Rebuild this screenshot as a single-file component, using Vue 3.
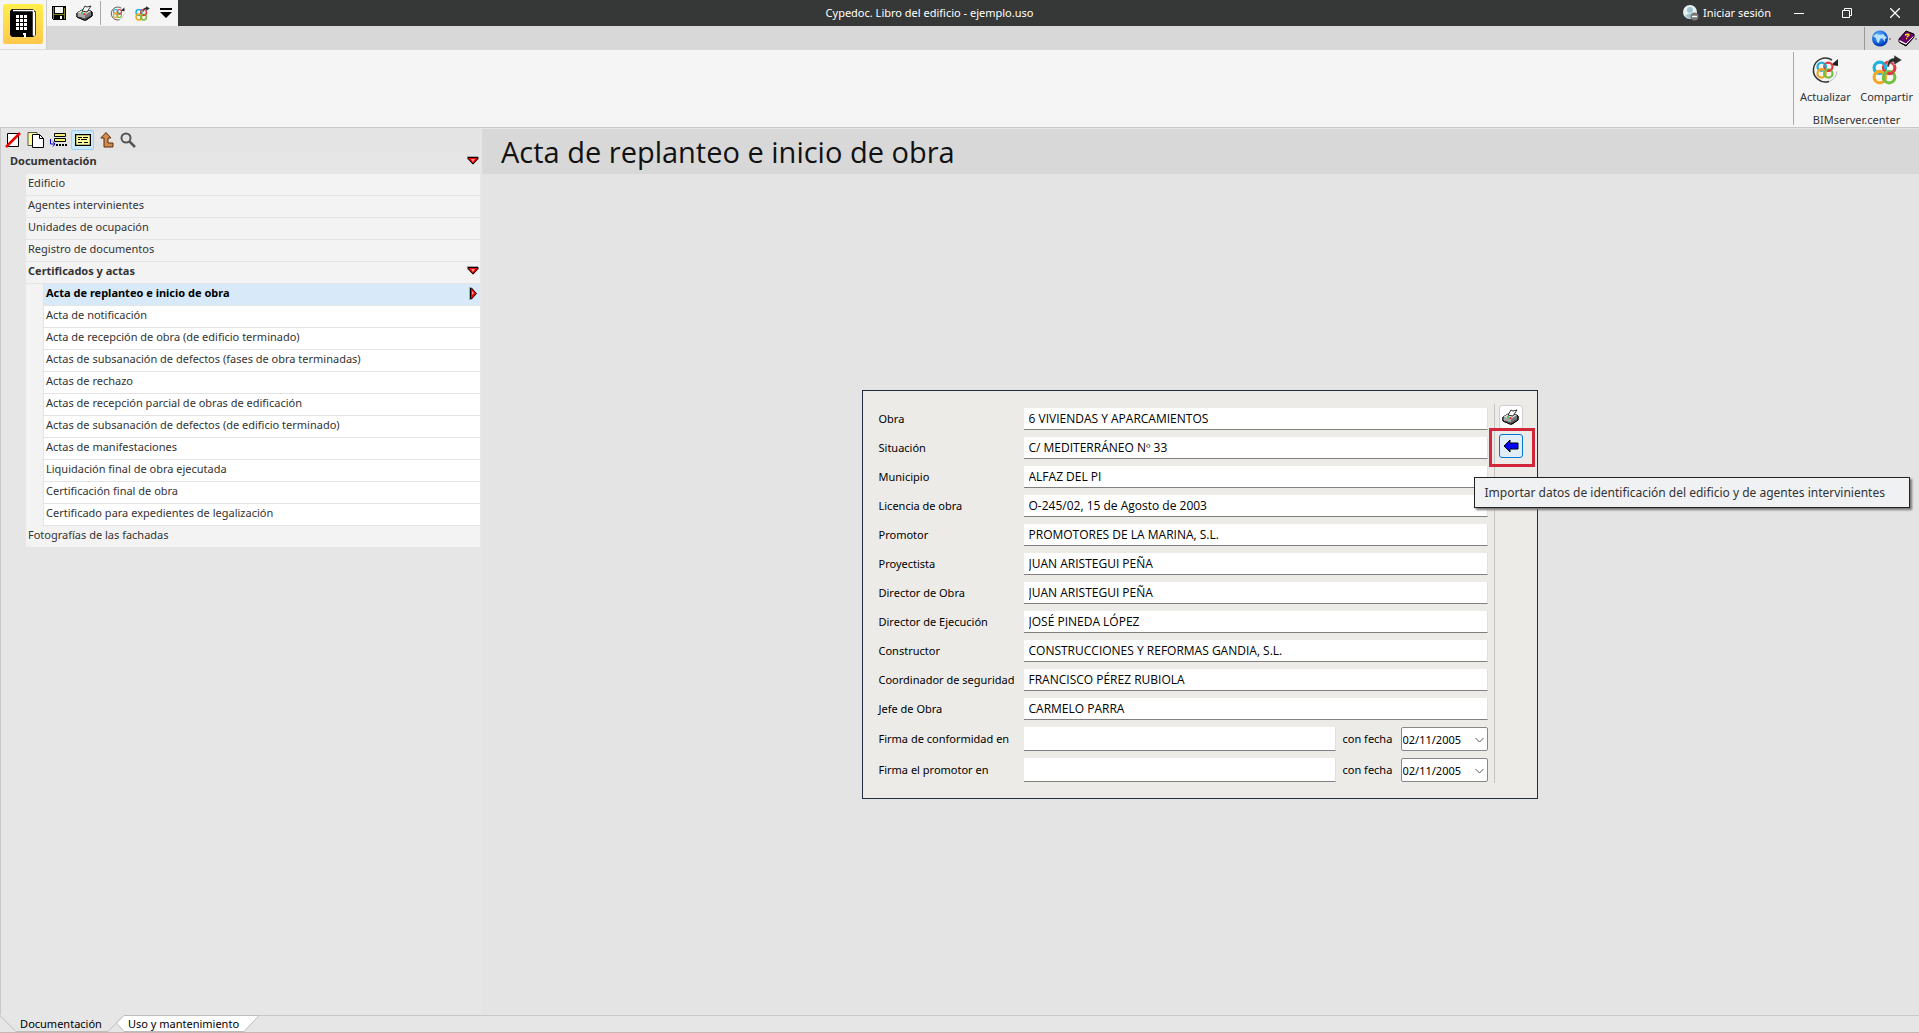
<script setup>
import { reactive, ref } from 'vue'

const sections = [
  { label: 'Edificio' },
  { label: 'Agentes intervinientes' },
  { label: 'Unidades de ocupación' },
  { label: 'Registro de documentos' },
  {
    label: 'Certificados y actas',
    children: [
      'Acta de replanteo e inicio de obra',
      'Acta de notificación',
      'Acta de recepción de obra (de edificio terminado)',
      'Actas de subsanación de defectos (fases de obra terminadas)',
      'Actas de rechazo',
      'Actas de recepción parcial de obras de edificación',
      'Actas de subsanación de defectos (de edificio terminado)',
      'Actas de manifestaciones',
      'Liquidación final de obra ejecutada',
      'Certificación final de obra',
      'Certificado para expedientes de legalización'
    ]
  },
  { label: 'Fotografías de las fachadas' }
]

const selected = ref('Acta de replanteo e inicio de obra')

const fields = reactive([
  { id: 'obra', label: 'Obra', value: '6 VIVIENDAS Y APARCAMIENTOS' },
  { id: 'situacion', label: 'Situación', value: 'C/ MEDITERRÁNEO Nº 33' },
  { id: 'municipio', label: 'Municipio', value: 'ALFAZ DEL PI' },
  { id: 'licencia', label: 'Licencia de obra', value: 'O-245/02, 15 de Agosto de 2003' },
  { id: 'promotor', label: 'Promotor', value: 'PROMOTORES DE LA MARINA, S.L.' },
  { id: 'proyectista', label: 'Proyectista', value: 'JUAN ARISTEGUI PEÑA' },
  { id: 'director-obra', label: 'Director de Obra', value: 'JUAN ARISTEGUI PEÑA' },
  { id: 'director-ejecucion', label: 'Director de Ejecución', value: 'JOSÉ PINEDA LÓPEZ' },
  { id: 'constructor', label: 'Constructor', value: 'CONSTRUCCIONES Y REFORMAS GANDIA, S.L.' },
  { id: 'coordinador', label: 'Coordinador de seguridad', value: 'FRANCISCO PÉREZ RUBIOLA' },
  { id: 'jefe', label: 'Jefe de Obra', value: 'CARMELO PARRA' }
])

const signatures = reactive([
  { id: 'firma-conformidad', label: 'Firma de conformidad en', place: '', date: '02/11/2005' },
  { id: 'firma-promotor', label: 'Firma el promotor en', place: '', date: '02/11/2005' }
])
</script>

<template>
  <div class="app">
    <svg class="defs" aria-hidden="true">
      <symbol id="rings" viewBox="0 0 24 24">
        <g fill="none" stroke-width="3">
          <circle cx="7.500" cy="7.500" r="5.500" stroke="#1fb0dc" />
          <circle cx="16.500" cy="7.500" r="5.500" stroke="#e03a40" />
          <circle cx="7.500" cy="16.500" r="5.500" stroke="#f5a623" />
          <circle cx="16.500" cy="16.500" r="5.500" stroke="#76bf43" />
          <path d="M11.400 3.600a5.500 5.500 0 0 1 1.400 5.400" stroke="#1fb0dc" />
          <path d="M20.400 11.400a5.500 5.500 0 0 1-5.400 1.400" stroke="#e03a40" />
          <path d="M3.600 12.600a5.500 5.500 0 0 1 5.400-1.400" stroke="#f5a623" />
          <path d="M12.600 20.400a5.500 5.500 0 0 1-1.400-5.400" stroke="#76bf43" />
        </g>
      </symbol>
      <symbol id="refresh" viewBox="0 0 28 28">
        <path d="M21 4A12 12 0 1 0 18 25.500" fill="none" stroke="#333" stroke-width="1.500" />
        <path d="M18 25.500A12 12 0 0 0 26 15" fill="none" stroke="#bbb" />
        <path d="M27 3v7l-7-1z" fill="#222" />
        <use href="#rings" x="5" y="5" width="18" height="18" />
      </symbol>
      <symbol id="share" viewBox="0 0 30 30">
        <use href="#rings" x="0" y="5" width="25" height="25" />
        <path d="M15 12c0-6 3-9 7-9V0l8 5-8 5V7c-3 0-4 1-5 5z" fill="#2b2b2b" stroke="#f5f5f5" stroke-width=".5" />
      </symbol>
      <symbol id="printer" viewBox="0 0 17 16">
        <path d="M1 8l5-3 9 1 1 1v4l-6 4h-2l-7-3z" fill="#777" stroke="#000" />
        <path d="M1 8l5-3 9 1-6 4z" fill="#d8d8d8" />
        <path d="M1 8l8 2v5l-8-3z" fill="#aaa" />
        <path d="M6 6l3-5 2 1 4-1-4 6z" fill="#fff" stroke="#000" stroke-width=".8" />
        <path d="M5 8h2" stroke="#0c3" stroke-width="1.500" />
        <path d="M7.500 9h2" stroke="#f00" stroke-width="1.500" />
        <path d="M1 8v4l7 3h2l6-4V7" fill="none" stroke="#000" />
        <path d="M3 12l6 2 5-3" fill="none" stroke="#444" />
      </symbol>
      <symbol id="marker-down" viewBox="0 0 12 10">
        <path d="M0 0h11l1 3-6 6-6-6z" fill="#aaa" />
        <path d="M1 1.500h10v1L6 8 1 2.500z" fill="#f00" stroke="#000" />
        <path d="M4 3h4L6 6z" fill="#f99" />
      </symbol>
    </svg>

    <header class="top">
      <button class="logo" aria-label="Cypedoc">
        <svg width="40" height="40" viewBox="0 0 40 40">
          <defs>
            <linearGradient id="gold" x1="0" y1="0" x2="0" y2="1">
              <stop offset="0" stop-color="#ffee4a" />
              <stop offset="1" stop-color="#ffc84e" />
            </linearGradient>
          </defs>
          <rect width="40" height="40" rx="2" fill="url(#gold)" />
          <path d="M9 5h21l3 3v23l-3 2H9l-2-2V7z" fill="#000" />
          <path d="M10 6.500h20.500V31h1V8" fill="none" stroke="#fff" stroke-width="1.500" />
          <g fill="#fff">
            <template v-for="r in 4" :key="r">
              <rect v-for="c in 3" :key="c" :x="9 + c * 4" :y="7 + r * 4" width="3" height="3" />
            </template>
            <path d="M20 29h3v5h-2v-3h-1z" />
          </g>
        </svg>
      </button>
      <div class="bars">
        <div class="titlebar">
          <div class="quick">
            <button aria-label="Guardar">
              <svg width="14" height="14" viewBox="0 0 14 14" shape-rendering="crispEdges">
                <path d="M0 0h14v14H1l-1-1z" fill="#000" />
                <path d="M1 1h1v12H1zM12 2h1v11h-1zM2 8h10v1H2z" fill="#808020" />
                <path d="M3 1h8v6H3z" fill="#f5f5f5" />
                <path d="M8 10h2v3H8z" fill="#fff" />
              </svg>
            </button>
            <button aria-label="Imprimir"><svg width="17" height="16"><use href="#printer" /></svg></button>
            <i></i>
            <button aria-label="Actualizar"><svg width="15" height="15"><use href="#refresh" /></svg></button>
            <button aria-label="Compartir"><svg width="15" height="15"><use href="#share" /></svg></button>
            <button aria-label="Personalizar">
              <svg width="12" height="10" viewBox="0 0 12 10"><path d="M0 0h12v2H0zM0 4h12L6 10z" fill="#000" /></svg>
            </button>
          </div>
          <div class="title">Cypedoc. Libro del edificio - ejemplo.uso</div>
          <div class="session">
            <button class="login">
              <svg width="16" height="16" viewBox="0 0 16 16">
                <circle cx="7" cy="7" r="7" fill="#e8f0f2" />
                <circle cx="7" cy="5" r="3" fill="#9cc4cf" />
                <path d="M2 11q5-5 9 0l-4 3z" fill="#9cc4cf" />
                <circle cx="11.500" cy="11.500" r="4" fill="#777" />
                <path d="M9 11.500h5" stroke="#fff" stroke-width="1.500" />
              </svg>
              Iniciar sesión
            </button>
            <button class="win" aria-label="Minimizar">
              <svg width="10" height="10"><path d="M0 5.500h10" stroke="#fff" /></svg>
            </button>
            <button class="win" aria-label="Restaurar">
              <svg width="10" height="10" fill="none" stroke="#fff"><path d="M.5 2.500h7v7h-7zM2.500 2.500v-2h7v7h-2" /></svg>
            </button>
            <button class="win" aria-label="Cerrar">
              <svg width="10" height="10"><path d="M0 0l10 10M10 0L0 10" stroke="#fff" stroke-width="1.300" /></svg>
            </button>
          </div>
        </div>
        <div class="tabbar">
          <button aria-label="Web">
            <svg width="19" height="17" viewBox="0 0 19 17">
              <defs>
                <radialGradient id="sea" cx=".4" cy=".3" r=".8">
                  <stop offset="0" stop-color="#5fb8ff" />
                  <stop offset=".6" stop-color="#1260d8" />
                  <stop offset="1" stop-color="#001a90" />
                </radialGradient>
              </defs>
              <circle cx="8" cy="8.500" r="8" fill="url(#sea)" />
              <path d="M1 6l3-2 4 1 3-1 4 4-2 1v3l-3-4-2 1-1 4-2-1-1-4z" fill="#c8ecff" opacity=".9" />
              <path d="M17 9h2" stroke="#555" />
            </svg>
          </button>
          <button aria-label="Ayuda">
            <svg width="19" height="17" viewBox="0 0 19 17">
              <path d="M1 9L8 1l8 3v3l-8 9-7-4z" fill="#6a006a" stroke="#000" />
              <path d="M1.500 10l6.500 3.500L15.500 6v1.500L8 15l-6.500-3z" fill="#fff" />
              <path d="M2 12.500l6 3 8-8.500" fill="none" stroke="#000" />
              <path d="M7 5l3-1 1 1-2 2M8 8.500h1" fill="none" stroke="#ffe600" stroke-width="1.400" />
              <path d="M17 9h2" stroke="#555" />
            </svg>
          </button>
        </div>
      </div>
    </header>

    <div class="ribbon">
      <div class="group">
        <div class="actions">
          <button><svg width="28" height="30"><use href="#refresh" /></svg>Actualizar</button>
          <button><svg width="30" height="30"><use href="#share" /></svg>Compartir</button>
        </div>
        <div class="group-name">BIMserver.center</div>
      </div>
    </div>

    <main class="body">
      <aside class="sidebar">
        <div class="tools">
          <button aria-label="Editar">
            <svg width="16" height="16" viewBox="0 0 16 16">
              <path d="M2.500 1.500h11v13h-11z" fill="#fff" stroke="#000" />
              <path d="M1 15L15 1" stroke="#e00" stroke-width="2.500" />
            </svg>
          </button>
          <button aria-label="Copiar">
            <svg width="17" height="16" viewBox="0 0 17 16">
              <path d="M1 .5h9v13H1z" fill="#ffff99" stroke="#555" />
              <path d="M5.500 2.500h7l4 4v9h-11z" fill="#fff" stroke="#000" />
              <path d="M12.500 2.500v4h4" fill="none" stroke="#000" />
            </svg>
          </button>
          <button aria-label="Insertar">
            <svg width="17" height="16" viewBox="0 0 17 16">
              <path d="M4.500 1.500h11v3h-11zM4.500 6.500h11v3h-11z" fill="#f5ef7a" stroke="#000" />
              <path d="M.5 7v5h4M3 9.500L5 12l-2 2.500" fill="none" stroke="#00c" />
              <path d="M6 13h11" stroke="#000" stroke-width="2" stroke-dasharray="2 1" />
            </svg>
          </button>
          <button class="on" aria-label="Ver datos">
            <svg width="16" height="12" viewBox="0 0 16 12">
              <path d="M.5.500h15v11H.5z" fill="#ffff99" stroke="#000" stroke-width="1.500" />
              <path d="M3 3.500h4M8 3.500h5M3 5.500h2M6 5.500h6M3 8.500h4M9 8.500h4" stroke="#000" />
            </svg>
          </button>
          <button aria-label="Subir">
            <svg width="14" height="16" viewBox="0 0 14 16">
              <path d="M6 .500L.800 6H4v9h9v-4H8V6h3z" fill="#d08b50" stroke="#5a2c0c" />
            </svg>
          </button>
          <button aria-label="Buscar">
            <svg width="16" height="16" viewBox="0 0 16 16" fill="none" stroke="#555">
              <circle cx="6" cy="6" r="4.500" stroke-width="2" /><path d="M9 9l6 6" stroke-width="2.500" />
            </svg>
          </button>
        </div>
        <nav class="tree">
          <button class="root">Documentación<svg width="12" height="10"><use href="#marker-down" /></svg></button>
          <ul>
            <li v-for="s in sections" :key="s.label">
              <button class="row" :class="{ parent: s.children }">
                {{ s.label }}
                <svg v-if="s.children" width="12" height="10"><use href="#marker-down" /></svg>
              </button>
              <ul v-if="s.children">
                <li v-for="c in s.children" :key="c">
                  <button class="row leaf" :class="{ selected: c === selected }" @click="selected = c">
                    {{ c }}
                    <svg v-if="c === selected" width="10" height="13" viewBox="0 0 10 13">
                      <path d="M.5 0v13" stroke="#aaa" />
                      <path d="M1.500 1v11h1l5-5.500L2.500 1z" fill="#f00" stroke="#000" />
                      <path d="M3 4v4l2-2z" fill="#f99" />
                    </svg>
                  </button>
                </li>
              </ul>
            </li>
          </ul>
        </nav>
      </aside>

      <section class="content">
        <h1>{{ selected }}</h1>
        <div class="stage">
          <form class="panel" @submit.prevent>
            <div class="fields">
              <div v-for="f in fields" :key="f.id" class="field">
                <label :for="f.id">{{ f.label }}</label>
                <input :id="f.id" v-model="f.value" type="text" />
              </div>
              <div v-for="s in signatures" :key="s.id" class="field sign">
                <label :for="s.id">{{ s.label }}</label>
                <input :id="s.id" v-model="s.place" type="text" />
                <label class="on-date" :for="s.id + '-fecha'">con fecha</label>
                <span class="combo">
                  <select :id="s.id + '-fecha'" v-model="s.date"><option>02/11/2005</option></select>
                  <svg width="9" height="6" viewBox="0 0 9 6"><path d="M.5 1l4 4 4-4" fill="none" stroke="#555" /></svg>
                </span>
              </div>
            </div>
            <div class="side">
              <button type="button" aria-label="Imprimir"><svg width="17" height="16"><use href="#printer" /></svg></button>
              <div class="import">
                <button type="button" class="hot" aria-describedby="import-tip" aria-label="Importar">
                  <svg width="16" height="14" viewBox="0 0 16 14">
                    <path d="M1 7l6-6v3h8v6H7v3z" fill="#00f" stroke="#000" />
                  </svg>
                </button>
                <span class="highlight"></span>
                <div id="import-tip" class="tip" role="tooltip">
                  Importar datos de identificación del edificio y de agentes intervinientes
                </div>
              </div>
            </div>
          </form>
        </div>
      </section>
    </main>

    <footer class="tabs">
      <button class="tab first">
        <svg width="124" height="17" viewBox="0 0 124 17" fill="none" stroke="#bdbdbd">
          <path d="M0 .5L16 16.500H108L124 .5" />
        </svg>
        <span>Documentación</span>
      </button>
      <button class="tab second">
        <svg width="144" height="17" viewBox="0 0 144 17">
          <path d="M.5 8L8 .5H143L128 16.500H8z" fill="#fff" stroke="#bdbdbd" />
        </svg>
        <span>Uso y mantenimiento</span>
      </button>
      <div class="rest"></div>
    </footer>
  </div>
</template>

<style>
body {
  margin: 0;
}
</style>

<style scoped>
.app {
  display: flex;
  flex-direction: column;
  min-height: 100vh;
  background: #e6e6e6;
  color: #333;
  font: 11px/16px "Noto Sans", "Open Sans", sans-serif;
  overflow: hidden;
}
.app * {
  box-sizing: border-box;
}
.defs {
  position: absolute;
  width: 0;
  height: 0;
}
svg {
  display: block;
  flex: none;
}
button {
  font: inherit;
  color: inherit;
  background: none;
  border: 0;
  padding: 0;
  margin: 0;
}
ul {
  list-style: none;
  margin: 0;
  padding: 0;
}

/* window header */
.top {
  display: flex;
  background: #d8d8d8;
}
.logo {
  width: 47px;
  height: 50px;
  padding: 4px 3px 5px;
  background: #f5f5f5;
  border-right: 1px solid #ccc;
  border-bottom: 1px solid #ddd;
}
.bars {
  flex: 1;
}
.titlebar {
  position: relative;
  display: flex;
  justify-content: space-between;
  height: 26px;
  background: #363837;
  color: #fff;
}
.quick {
  display: flex;
  align-items: center;
  gap: 10px;
  padding: 0 6px 0 5px;
  background: #f5f5f5;
}
.quick i {
  width: 1px;
  height: 24px;
  margin: 0 -1px 0 -3px;
  background: #aaa;
}
.title {
  position: absolute;
  left: 0;
  right: 107px;
  line-height: 26px;
  text-align: center;
  pointer-events: none;
}
.session {
  display: flex;
  align-items: center;
}
.login {
  display: flex;
  align-items: center;
  gap: 4px;
  margin-right: 4px;
}
.win {
  display: grid;
  place-items: center;
  width: 48px;
  height: 26px;
}
.tabbar {
  display: flex;
  justify-content: flex-end;
  align-items: center;
  gap: 7px;
  height: 24px;
  padding-right: 2px;
}
.tabbar button:first-child {
  padding: 3px 0 3px 7px;
  border-left: 1px solid #999;
}

/* ribbon */
.ribbon {
  display: flex;
  justify-content: flex-end;
  height: 78px;
  padding-top: 2px;
  background: #f5f5f5;
  border-bottom: 1px solid #c8c8c8;
}
.group {
  width: 126px;
  height: 73px;
  border-left: 1px solid #aaa;
}
.actions {
  display: flex;
  justify-content: space-between;
  padding: 3px 6px 0;
}
.actions button {
  display: flex;
  flex-direction: column;
  align-items: center;
  gap: 4px;
}
.group-name {
  margin-top: 7px;
  text-align: center;
}

/* sidebar */
.body {
  flex: 1;
  display: flex;
}
.sidebar {
  width: 482px;
  padding-right: 2px;
  border-left: 1px solid #c8c8c8;
}
.tools {
  display: flex;
  align-items: center;
  gap: 6px;
  height: 23px;
  padding-left: 4px;
  background: #e4e4e4;
}
.tools .on {
  display: grid;
  place-items: center;
  width: 23px;
  height: 20px;
  margin: 0 0 0 -2px;
  background: #cce8ff;
  border: 1px solid #99d1ff;
  border-radius: 2px;
}
.root,
.row {
  display: flex;
  align-items: center;
  justify-content: space-between;
  width: 100%;
  height: 22px;
  text-align: left;
}
.root {
  height: 23px;
  padding: 0 1px 3px 9px;
  font-weight: bold;
}
.tree > ul {
  margin-left: 25px;
  background: #f3f3f3;
}
.row {
  padding: 0 1px 3px 2px;
  border-bottom: 1px solid #e4e4e4;
}
.parent {
  font-weight: bold;
}
li ul {
  padding-left: 17px;
}
.leaf {
  background: #fff;
  border-left: 1px solid #e4e4e4;
}
.selected {
  background: #d8eaf9;
  color: #000;
  font-weight: bold;
}

/* content */
.content {
  flex: 1;
  display: flex;
  flex-direction: column;
  background: #e4e4e4;
}
h1 {
  margin: 1px 0 0;
  padding-left: 19px;
  background: #d8d8d8;
  color: #111;
  font-family: "Open Sans", "Noto Sans", sans-serif;
  font-size: 29px;
  font-weight: normal;
  line-height: 45px;
}
.stage {
  flex: 1;
  display: grid;
  place-items: center;
  padding-right: 2px;
}
.panel {
  display: flex;
  width: 676px;
  padding: 13px 14px 15px 16px;
  background: #ecebe8;
  border: 1px solid #1e2c42;
  color: #000;
}
.fields {
  flex: 1;
  display: flex;
  flex-direction: column;
  gap: 7px;
  padding: 4px 6px 1px 0;
}
.field {
  display: flex;
  height: 22px;
  line-height: 22px;
  white-space: nowrap;
}
.field label {
  width: 145px;
}
.field input {
  flex: 1;
  min-width: 0;
  padding: 0 5px;
  font-family: "Open Sans", "Noto Sans", sans-serif;
  font-size: 12px;
  color: inherit;
  background: #fff;
  border: 0;
  border-right: 1px solid #e0e0e0;
  border-bottom: 1px solid #808080;
}
.sign,
.sign .combo {
  height: 24px;
  line-height: 24px;
}
.field .on-date {
  width: 65px;
  padding-left: 7px;
}
.combo {
  position: relative;
  width: 87px;
}
.combo select {
  appearance: none;
  width: 100%;
  height: 24px;
  padding: 0 1px;
  font: inherit;
  color: inherit;
  background: #fff;
  border: 1px solid #888;
  border-radius: 2px;
}
.combo svg {
  position: absolute;
  right: 4px;
  top: 10px;
  pointer-events: none;
}
.side {
  display: flex;
  flex-direction: column;
  gap: 5px;
  padding: 1px 0 0 4px;
  border-left: 1px solid #c4c4c4;
  width: 29px;
}
.side button {
  display: grid;
  place-items: center;
  width: 24px;
  height: 24px;
  background: #fdfdfd;
  border: 1px solid #d0d0d0;
  border-radius: 3px;
}
.side .hot {
  background: #e0eef9;
  border-color: #0078d4;
}
.import {
  position: relative;
}
.highlight {
  position: absolute;
  left: -10px;
  top: -6px;
  width: 46px;
  height: 39px;
  border: 3px solid #d0283a;
  pointer-events: none;
}
.tip {
  position: absolute;
  left: -25px;
  top: 43px;
  width: 436px;
  padding: 0 10px;
  line-height: 29px;
  white-space: nowrap;
  font-size: 12px;
  color: #333;
  background: #f0f1f3;
  border: 1px solid #222;
  box-shadow: 2px 2px 2px #777;
}

/* bottom tabs */
.tabs {
  display: flex;
  height: 18px;
  border-bottom: 1px solid #c9b4b4;
  color: #000;
}
.tab {
  position: relative;
  height: 17px;
}
.tab svg {
  position: absolute;
  left: 0;
  top: 0;
}
.tab span {
  position: relative;
}
.first {
  width: 116px;
  padding-left: 6px;
}
.second {
  width: 143px;
  padding-right: 8px;
}
.rest {
  flex: 1;
  border-top: 1px solid #c8c8c8;
}
</style>
